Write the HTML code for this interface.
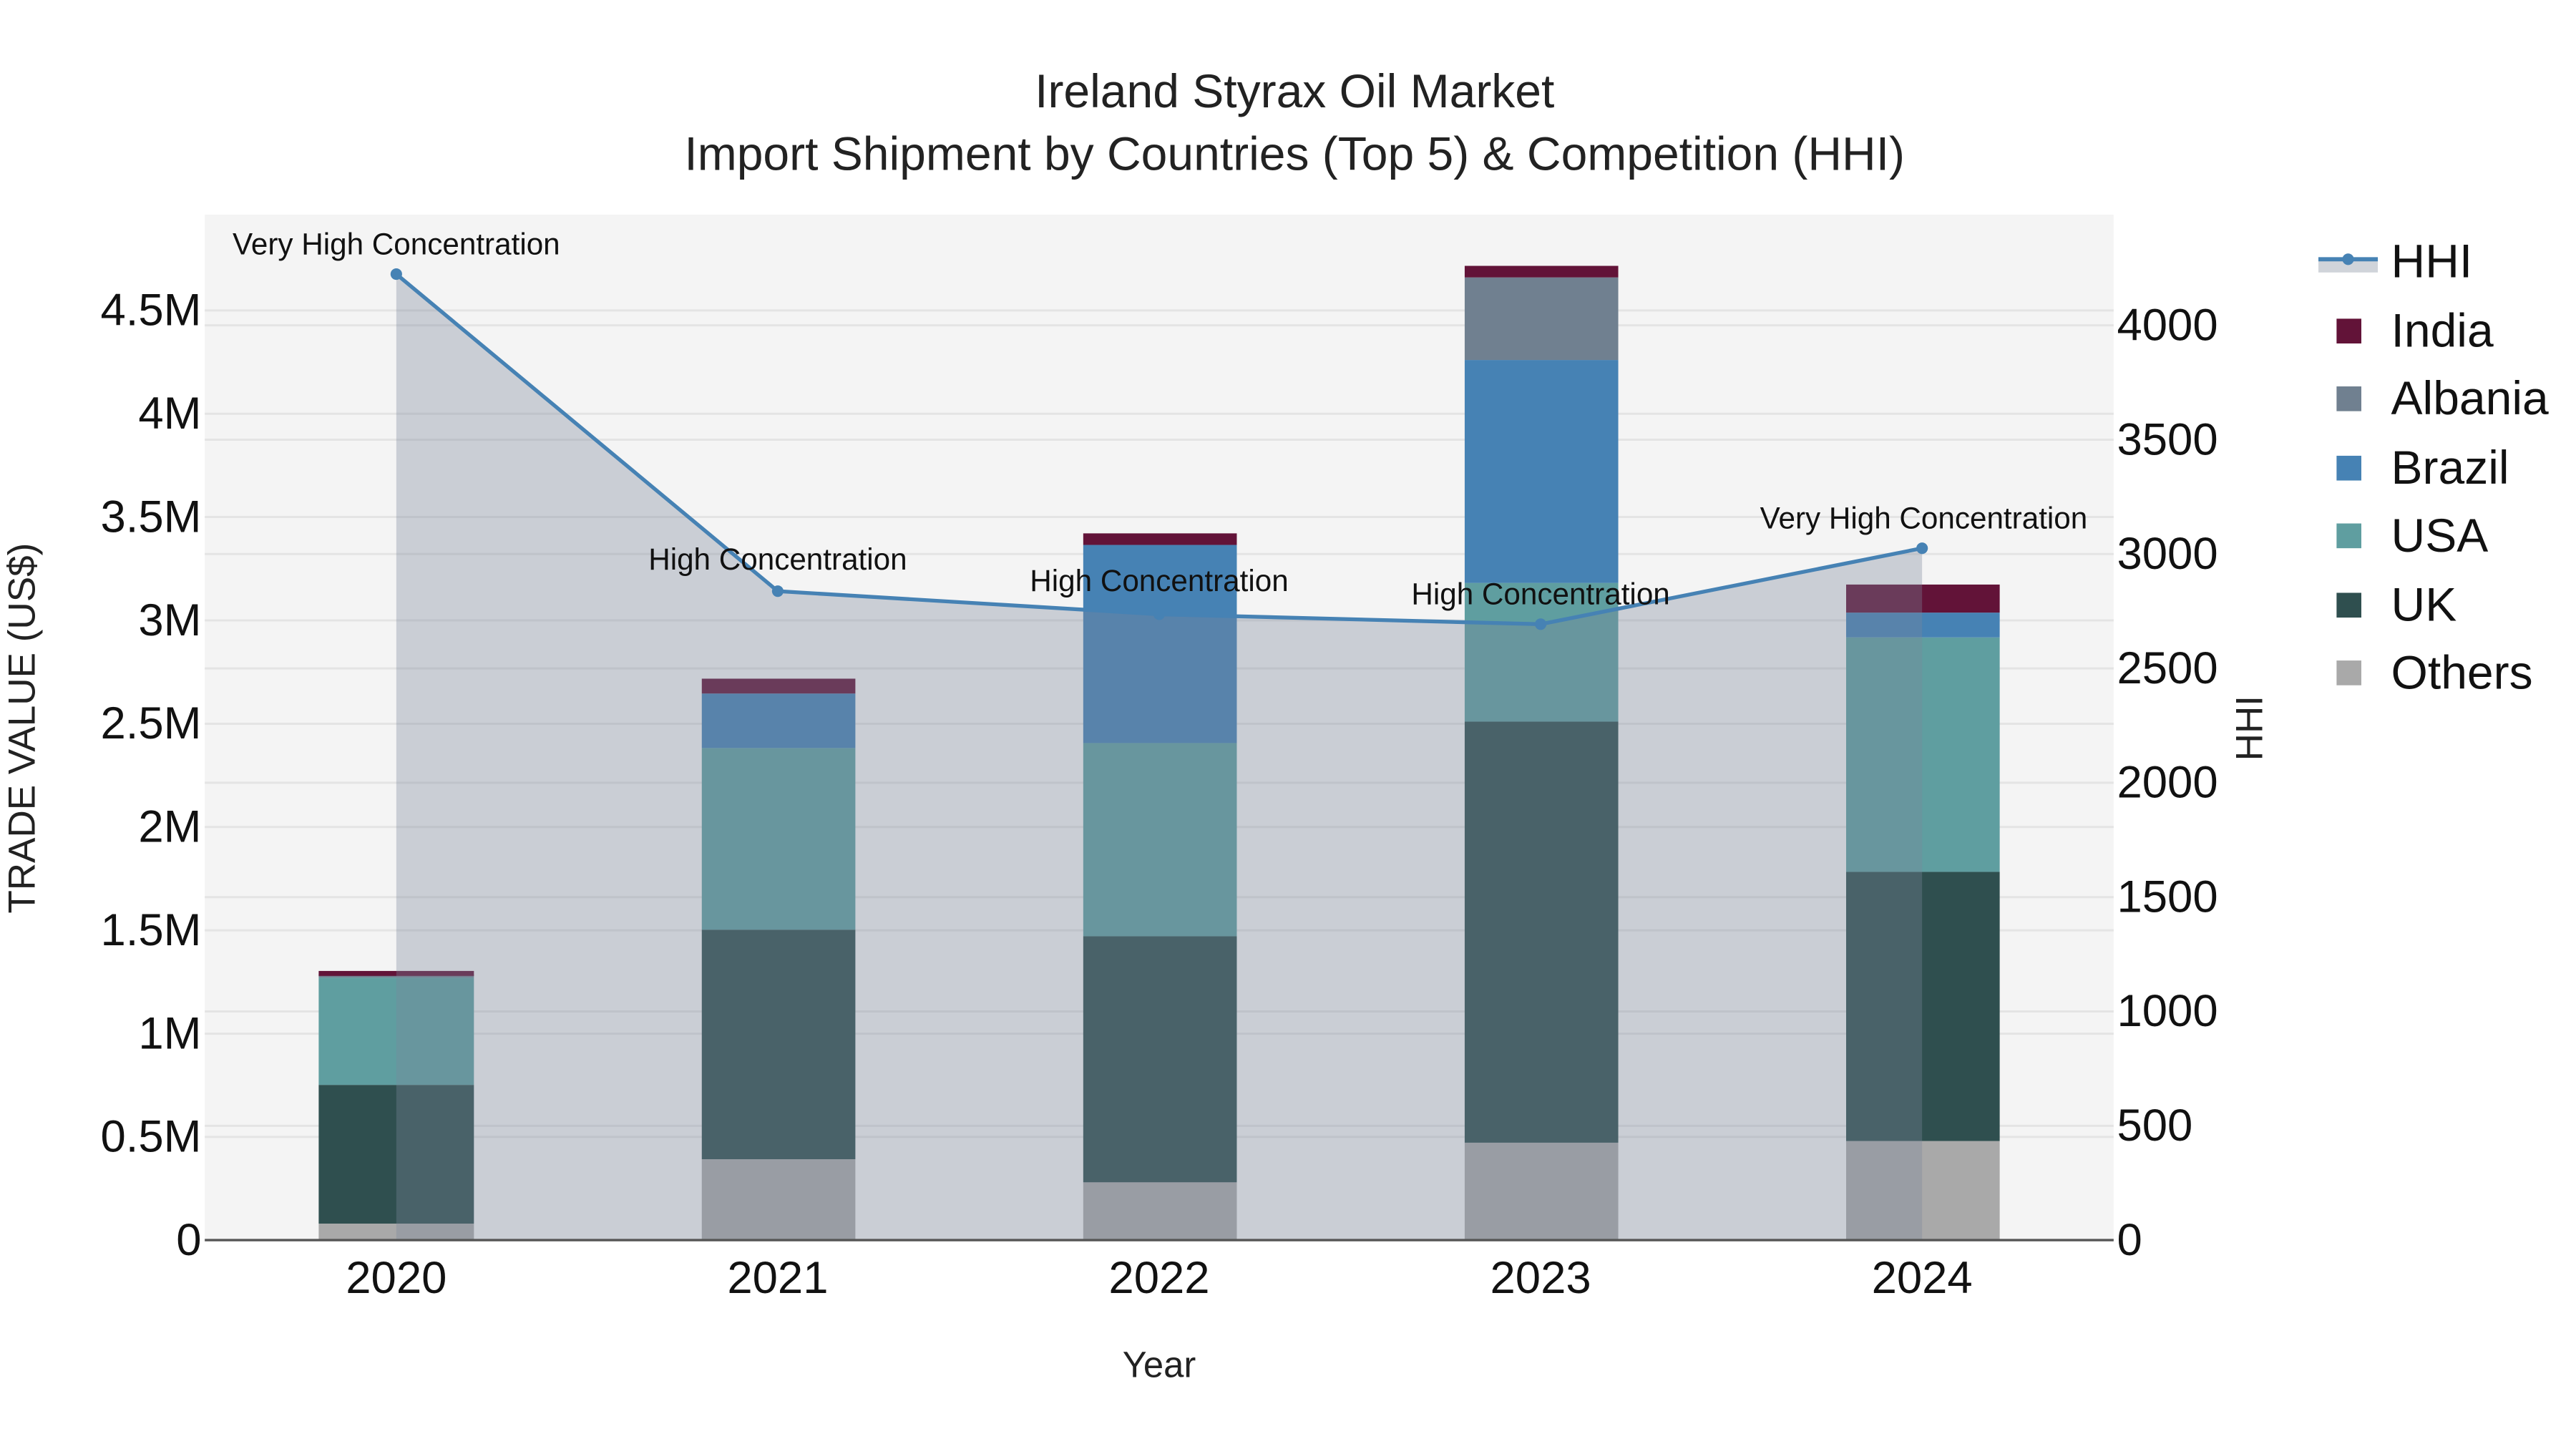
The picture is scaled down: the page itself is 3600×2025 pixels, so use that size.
<!DOCTYPE html>
<html><head><meta charset="utf-8"><style>
html,body{margin:0;padding:0;background:#fff;}
svg{display:block;}
text{font-family:"Liberation Sans",sans-serif;}
</style></head><body>
<svg width="3600" height="2025" viewBox="0 0 1560 877.5" xmlns="http://www.w3.org/2000/svg">
<rect width="1560" height="877.5" fill="#fff"/>
<rect x="124" y="130" width="1156" height="621" fill="#f4f4f4"/>
<g stroke="#e4e4e4" stroke-width="1.3">
<line x1="124" x2="1280" y1="688.5" y2="688.5"/><line x1="124" x2="1280" y1="626" y2="626"/>
<line x1="124" x2="1280" y1="563.4" y2="563.4"/><line x1="124" x2="1280" y1="500.8" y2="500.8"/>
<line x1="124" x2="1280" y1="438.3" y2="438.3"/><line x1="124" x2="1280" y1="375.7" y2="375.7"/>
<line x1="124" x2="1280" y1="313.1" y2="313.1"/><line x1="124" x2="1280" y1="250.6" y2="250.6"/>
<line x1="124" x2="1280" y1="188" y2="188"/>
<line x1="124" x2="1280" y1="681.8" y2="681.8"/><line x1="124" x2="1280" y1="612.5" y2="612.5"/>
<line x1="124" x2="1280" y1="543.3" y2="543.3"/><line x1="124" x2="1280" y1="474" y2="474"/>
<line x1="124" x2="1280" y1="404.8" y2="404.8"/><line x1="124" x2="1280" y1="335.5" y2="335.5"/>
<line x1="124" x2="1280" y1="266.3" y2="266.3"/><line x1="124" x2="1280" y1="197" y2="197"/>
</g>
<g>
<rect x="193" y="741" width="94" height="10" fill="#a9a9a9"/>
<rect x="193" y="657" width="94" height="84" fill="#2f4f4f"/>
<rect x="193" y="592" width="94" height="65" fill="#5f9ea0"/>
<rect x="193" y="590" width="94" height="2" fill="#708090"/>
<rect x="193" y="588" width="94" height="3" fill="#621338"/>

<rect x="425" y="702" width="93" height="49" fill="#a9a9a9"/>
<rect x="425" y="563" width="93" height="139" fill="#2f4f4f"/>
<rect x="425" y="453" width="93" height="110" fill="#5f9ea0"/>
<rect x="425" y="420" width="93" height="33" fill="#4682b4"/>
<rect x="425" y="411" width="93" height="9" fill="#621338"/>

<rect x="656" y="716" width="93" height="35" fill="#a9a9a9"/>
<rect x="656" y="567" width="93" height="149" fill="#2f4f4f"/>
<rect x="656" y="450" width="93" height="117" fill="#5f9ea0"/>
<rect x="656" y="330" width="93" height="120" fill="#4682b4"/>
<rect x="656" y="323" width="93" height="7" fill="#621338"/>

<rect x="887" y="692" width="93" height="59" fill="#a9a9a9"/>
<rect x="887" y="437" width="93" height="255" fill="#2f4f4f"/>
<rect x="887" y="353" width="93" height="84" fill="#5f9ea0"/>
<rect x="887" y="218" width="93" height="135" fill="#4682b4"/>
<rect x="887" y="168" width="93" height="50" fill="#708090"/>
<rect x="887" y="161" width="93" height="7" fill="#621338"/>

<rect x="1118" y="691" width="93" height="60" fill="#a9a9a9"/>
<rect x="1118" y="528" width="93" height="163" fill="#2f4f4f"/>
<rect x="1118" y="386" width="93" height="142" fill="#5f9ea0"/>
<rect x="1118" y="371" width="93" height="15" fill="#4682b4"/>
<rect x="1118" y="354" width="93" height="17" fill="#621338"/>
</g>
<polygon points="240,166 471,358 702,372 933,378 1164,332 1164,751 240,751" fill="rgba(123,135,155,0.35)"/>
<line x1="124" x2="1280" y1="751" y2="751" stroke="#555" stroke-width="1.5"/>
<polyline points="240,166 471,358 702,372 933,378 1164,332" fill="none" stroke="#4682b4" stroke-width="2.3"/>
<g fill="#4682b4"><circle cx="240" cy="166" r="3.5"/><circle cx="471" cy="358" r="3.5"/><circle cx="702" cy="372" r="3.5"/><circle cx="933" cy="378" r="3.5"/><circle cx="1164" cy="332" r="3.5"/></g>
<g font-size="18.3" fill="#111" text-anchor="middle">
<text x="240" y="154">Very High Concentration</text>
<text x="471" y="345">High Concentration</text>
<text x="702" y="358">High Concentration</text>
<text x="933" y="366">High Concentration</text>
<text x="1165" y="320">Very High Concentration</text>
</g>
<g font-size="28.6" fill="#222" text-anchor="middle">
<text x="784" y="65">Ireland Styrax Oil Market</text>
<text x="784" y="103">Import Shipment by Countries (Top 5) &amp; Competition (HHI)</text>
</g>
<g font-size="27.5" fill="#111" text-anchor="end">
<text x="122" y="760">0</text><text x="122" y="697.5">0.5M</text><text x="122" y="635">1M</text>
<text x="122" y="572.4">1.5M</text><text x="122" y="509.8">2M</text><text x="122" y="447.3">2.5M</text>
<text x="122" y="384.7">3M</text><text x="122" y="322.1">3.5M</text><text x="122" y="259.6">4M</text>
<text x="122" y="197">4.5M</text>
</g>
<g font-size="27.5" fill="#111" text-anchor="start">
<text x="1282" y="760">0</text><text x="1282" y="690.8">500</text><text x="1282" y="621.5">1000</text>
<text x="1282" y="552.3">1500</text><text x="1282" y="483">2000</text><text x="1282" y="413.8">2500</text>
<text x="1282" y="344.5">3000</text><text x="1282" y="275.3">3500</text><text x="1282" y="206">4000</text>
</g>
<g font-size="27.5" fill="#111" text-anchor="middle">
<text x="240" y="783">2020</text><text x="471" y="783">2021</text><text x="702" y="783">2022</text>
<text x="933" y="783">2023</text><text x="1164" y="783">2024</text>
</g>
<text x="702" y="834" font-size="22" fill="#222" text-anchor="middle">Year</text>
<text transform="translate(21,441) rotate(-90)" font-size="23" fill="#222" text-anchor="middle">TRADE VALUE (US$)</text>
<text transform="translate(1370,441) rotate(-90)" font-size="23" fill="#222" text-anchor="middle">HHI</text>
<rect x="1404" y="158" width="36" height="7" fill="#d0d4da"/>
<line x1="1404" x2="1440" y1="157" y2="157" stroke="#4682b4" stroke-width="2.5"/>
<circle cx="1422" cy="157" r="3.5" fill="#4682b4"/>
<g>
<rect x="1415" y="193" width="15" height="15" fill="#621338"/>
<rect x="1415" y="234" width="15" height="15" fill="#708090"/>
<rect x="1415" y="276" width="15" height="15" fill="#4682b4"/>
<rect x="1415" y="317" width="15" height="15" fill="#5f9ea0"/>
<rect x="1415" y="359" width="15" height="15" fill="#2f4f4f"/>
<rect x="1415" y="400" width="15" height="15" fill="#a9a9a9"/>
</g>
<g font-size="28.6" fill="#111">
<text x="1448" y="168">HHI</text><text x="1448" y="210">India</text><text x="1448" y="251">Albania</text>
<text x="1448" y="293">Brazil</text><text x="1448" y="334">USA</text><text x="1448" y="376">UK</text>
<text x="1448" y="417">Others</text>
</g>
</svg>
</body></html>
